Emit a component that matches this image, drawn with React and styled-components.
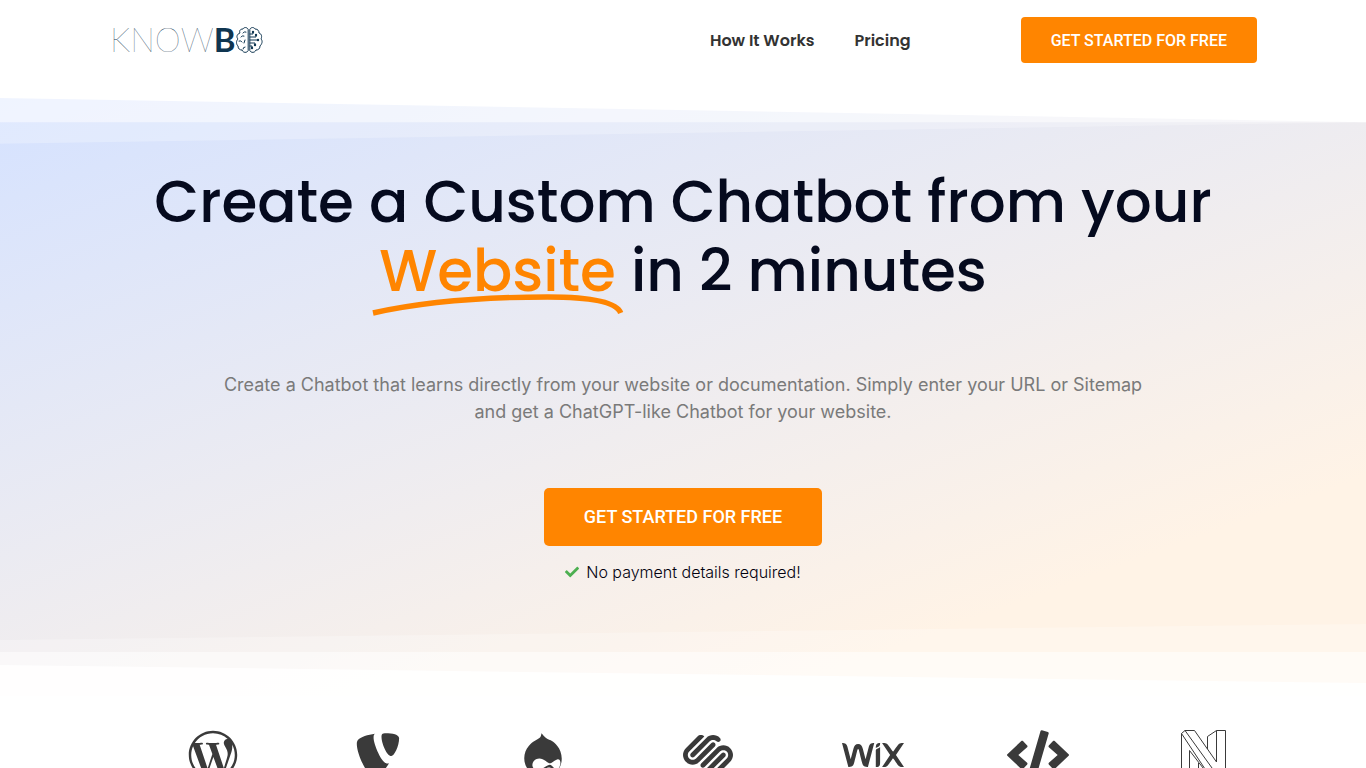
import React from "react";
import styled, { createGlobalStyle } from "styled-components";
import { FaWordpressSimple, FaTypo3, FaDrupal, FaSquarespace, FaWix, FaCode, FaCheck } from "react-icons/fa";

const GlobalStyle = createGlobalStyle`
  *, *::before, *::after { box-sizing: border-box; }
  body {
    margin: 0;
    background: #fff;
    color: #02010f;
    font-family: Inter, "Liberation Sans", sans-serif;
    overflow-x: hidden;
  }
`;

const Header = styled.header`
  display: flex;
  align-items: center;
  justify-content: space-between;
  height: 80px;
  margin-bottom: 18px;
  padding: 0 109px 0 110px;
`;

const Logo = styled.a`
  display: flex;
  align-items: center;
  color: #0f3550;
  font: 100 33px/36px Lato, "Liberation Sans", sans-serif;
  text-decoration: none;

  span { padding-bottom: 2px; }
  b { font-weight: 700; }
  svg { width: 27px; height: 28px; }
`;

const HeaderEnd = styled.div`
  display: flex;
  align-items: center;
  gap: 110px;
`;

const Nav = styled.nav`
  display: flex;
  gap: 40px;
  padding-top: 2px;
`;

const NavLink = styled.a`
  color: #333;
  font: 600 16px/24px Poppins, Inter, sans-serif;
  text-decoration: none;
`;

const CallToAction = styled.button`
  border: 0;
  border-radius: ${(p) => (p.$large ? 5 : 4)}px;
  padding: ${(p) => (p.$large ? "0 40px" : "2px 30px 0")};
  height: ${(p) => (p.$large ? 58 : 46)}px;
  background: #ff8500;
  color: #fff;
  font: 500 ${(p) => (p.$large ? 18 : 16)}px/20px Roboto, sans-serif;
  cursor: pointer;
`;

const Hero = styled.section`
  position: relative;
  display: flex;
  flex-direction: column;
  align-items: center;
  padding: 69px 20px 112px;
  background: linear-gradient(160deg, #d5e2ff 0%, #fff3e6 80%);
  text-align: center;
`;

const Divider = styled.svg`
  position: absolute;
  left: 0;
  ${(p) => (p.$bottom ? "bottom: 0;" : "top: 0;")}
  width: 100%;
  height: ${(p) => (p.$bottom ? 72 : 46)}px;
  fill: #fff;
`;

const Title = styled.h1`
  position: relative;
  margin: 0;
  color: #050a1e;
  font: 500 58px/69px Poppins, Inter, sans-serif;
`;

const Highlight = styled.span`
  position: relative;
  display: inline-block;
  color: #ff8500;

  svg {
    position: absolute;
    left: -7px;
    bottom: -12px;
    width: calc(100% + 14px);
    height: 24px;
    overflow: visible;
  }
`;

const Lead = styled.p`
  position: relative;
  max-width: 940px;
  margin: 66px 0 63px;
  color: #7a7a7a;
  font-size: 18px;
  line-height: 27px;
`;

const Note = styled.p`
  position: relative;
  display: flex;
  align-items: center;
  gap: 7px;
  margin: 14px 0 0;
  font-size: 16px;
  font-weight: 300;
  line-height: 24px;

  svg { color: #4caf50; width: 14px; height: 14px; }
`;

const Platforms = styled.section`
  display: grid;
  grid-template-columns: repeat(7, 1fr);
  justify-items: center;
  padding: 34px 81px 60px 131px;
  color: #3a3a3a;
`;

const Platform = styled.div`
  svg {
    display: block;
    width: ${(p) => (p.$wide ? 62 : 50)}px;
    height: 50px;
  }
`;

function BrainMark() {
  return (
    <svg viewBox="1 0 27 28" fill="none" stroke="currentColor" strokeWidth="1" strokeLinecap="round" strokeLinejoin="round" aria-hidden="true">
      <path d="M13 3C12 1 9 1 8 3C5 3 4 5 5 7C2 8 1 11 3 13C1 15 1 18 3 20C3 23 5 24 7 24C8 27 12 27 13 25Z" />
      <path d="M15 3C16 1 19 1 20 3C23 3 24 5 24 7C27 8 27 11 26 13C28 15 27 18 25 20C25 23 23 24 21 24C20 27 16 27 15 25Z" />
      <path d="M8 7Q9 5 11 6M6 11Q7 9 9 10M4 15Q6 14 7 16M10 14L9 17M10 21Q8 21 8 23" />
      <path d="M15 8H18V6M15 11H21V9M15 14H23M15 17H20V19M15 20H17V22" />
      <g fill="currentColor" stroke="none">
        <circle cx="18" cy="6" r="1.2" /><circle cx="21" cy="9" r="1.2" /><circle cx="23" cy="14" r="1.2" />
        <circle cx="20" cy="19" r="1.2" /><circle cx="17" cy="22" r="1.2" />
      </g>
    </svg>
  );
}

function OutlineN() {
  return (
    <svg viewBox="0 0 46 50" fill="none" stroke="currentColor" strokeWidth="1" strokeLinejoin="round" role="img" aria-label="N">
      <path d="M1.5 50V3.5L5 .5H14.5L36.5 32V.5H45.5V46L42 49.5H32L9.5 20.5V50" />
      <path d="M5 .5L36 43.5M1.5 3.5L32 49.5M36.5 .5L27.5 6.5V19M18.5 33V44L9.5 50H1.5" />
    </svg>
  );
}

export default function App() {
  return (
    <>
      <GlobalStyle />
      <Header>
        <Logo href="#" aria-label="Knowbo">
          <span>KNOW<b>B</b></span>
          <BrainMark />
        </Logo>
        <HeaderEnd>
          <Nav>
            <NavLink href="#how">How It Works</NavLink>
            <NavLink href="#pricing">Pricing</NavLink>
          </Nav>
          <CallToAction>GET STARTED FOR FREE</CallToAction>
        </HeaderEnd>
      </Header>
      <main>
        <Hero>
          <Divider viewBox="0 0 2600 131" preserveAspectRatio="none" aria-hidden="true">
            <path d="M0 0H2600V69Z" />
            <path opacity=".5" d="M0 0H2600V69H0Z" />
            <path opacity=".25" d="M2600 0H0V130L2600 69Z" />
          </Divider>
          <Divider $bottom viewBox="0 0 1366 72" preserveAspectRatio="none" aria-hidden="true">
            <path opacity=".25" d="M0 16L1366 0V72H0Z" />
            <path opacity=".5" d="M0 28H1366V72H0Z" />
            <path opacity=".85" d="M0 41L1366 59V72H0Z" />
          </Divider>
          <Title>
            Create a Custom Chatbot from your
            <br />
            <Highlight>
              Website
              <svg viewBox="0 0 250 24" preserveAspectRatio="none" fill="none" stroke="currentColor" strokeWidth="5.4" aria-hidden="true">
                <path d="M1 20C55 8 115 4 175 4C218 4 244 9 248 20" />
              </svg>
            </Highlight>{" "}
            in 2 minutes
          </Title>
          <Lead>
            Create a Chatbot that learns directly from your website or documentation. Simply enter your URL or Sitemap
            and get a ChatGPT-like Chatbot for your website.
          </Lead>
          <CallToAction $large>GET STARTED FOR FREE</CallToAction>
          <Note>
            <FaCheck aria-hidden="true" />
            No payment details required!
          </Note>
        </Hero>
        <Platforms>
          <Platform><FaWordpressSimple title="WordPress" /></Platform>
          <Platform><FaTypo3 title="TYPO3" /></Platform>
          <Platform><FaDrupal title="Drupal" /></Platform>
          <Platform><FaSquarespace title="Squarespace" /></Platform>
          <Platform $wide><FaWix title="Wix" /></Platform>
          <Platform $wide><FaCode title="Custom code" /></Platform>
          <Platform><OutlineN /></Platform>
        </Platforms>
      </main>
    </>
  );
}
